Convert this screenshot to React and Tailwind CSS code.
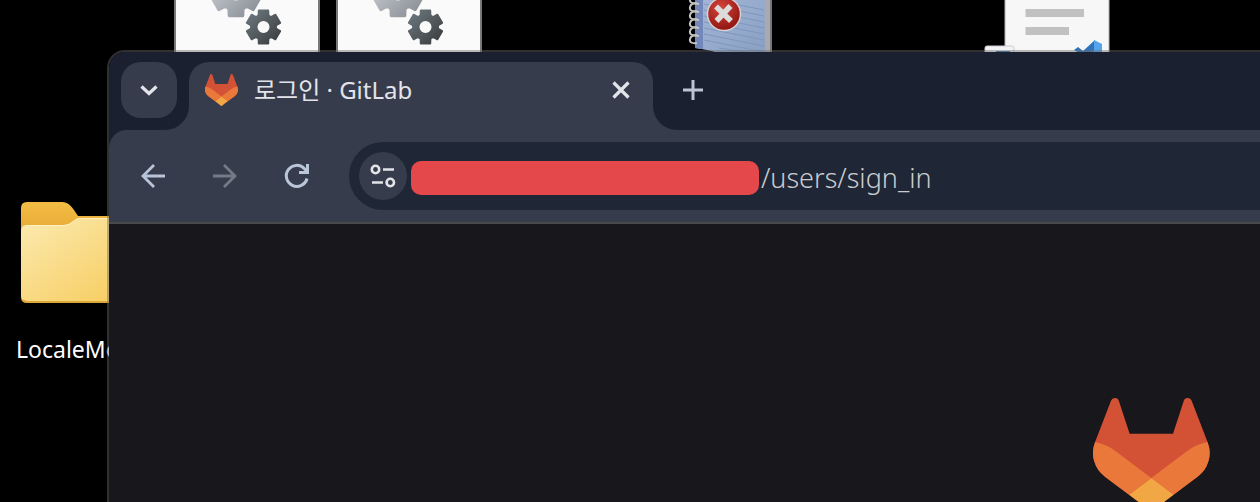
import React from "react";

const gearPath = (cx, cy, r, hole) => {
  const shape = [
    [-30, 0.68],
    [-22, 0.72],
    [-16, 0.95],
    [16, 0.95],
    [22, 0.72],
  ];
  const points = [];
  for (let tooth = 0; tooth < 6; tooth++) {
    for (const [angle, radius] of shape) {
      const a = ((tooth * 60 + 90 + angle) * Math.PI) / 180;
      points.push(
        `${(cx + r * radius * Math.cos(a)).toFixed(2)} ${(cy + r * radius * Math.sin(a)).toFixed(2)}`
      );
    }
  }
  return `M${points.join("L")}Z M${cx - hole} ${cy}a${hole} ${hole} 0 1 0 ${hole * 2} 0a${hole} ${hole} 0 1 0 ${-hole * 2} 0Z`;
};

function GitLabLogo({ className }) {
  return (
    <svg viewBox="0 0 25 24" className={className} aria-hidden="true">
      <path
        fill="#d35135"
        d="m24.507 9.5-.034-.09L21.082.562a.896.896 0 0 0-1.694.091l-2.29 7.01H7.825L5.535.653a.898.898 0 0 0-1.694-.09L.451 9.411.416 9.5a6.297 6.297 0 0 0 2.09 7.278l.012.01.03.022 5.16 3.867 2.56 1.935 1.554 1.176a1.051 1.051 0 0 0 1.268 0l1.555-1.176 2.56-1.935 5.197-3.89.014-.01A6.297 6.297 0 0 0 24.507 9.5Z"
      />
      <path
        fill="#eb783b"
        d="m24.507 9.5-.034-.09a11.44 11.44 0 0 0-4.56 2.051l-7.447 5.632 4.742 3.584 5.197-3.89.014-.01A6.297 6.297 0 0 0 24.507 9.5Z"
      />
      <path
        fill="#f0a744"
        d="m7.707 20.677 2.56 1.935 1.555 1.176a1.051 1.051 0 0 0 1.268 0l1.555-1.176 2.56-1.935-4.743-3.584-4.755 3.584Z"
      />
      <path
        fill="#eb783b"
        d="M5.01 11.461a11.43 11.43 0 0 0-4.56-2.05L.416 9.5a6.297 6.297 0 0 0 2.09 7.278l.012.01.03.022 5.16 3.867 4.745-3.584-7.444-5.632Z"
      />
    </svg>
  );
}

function BatchFileIcon({ id, className }) {
  return (
    <svg viewBox="0 0 146 60" className={className} aria-hidden="true">
      <defs>
        <linearGradient id={`${id}-light`} x1="0" y1="0" x2="1" y2="1">
          <stop offset="0.3" stopColor="#bcc0c6" />
          <stop offset="1" stopColor="#858b92" />
        </linearGradient>
        <linearGradient id={`${id}-dark`} x1="0" y1="0" x2="1" y2="1">
          <stop offset="0.1" stopColor="#68747a" />
          <stop offset="0.9" stopColor="#3f4143" />
        </linearGradient>
      </defs>
      <path fill="#fafafa" stroke="#7b7976" strokeWidth="2" d="M1-5h144v75H1z" />
      <path
        fill={`url(#${id}-light)`}
        stroke={`url(#${id}-light)`}
        strokeWidth="3"
        strokeLinejoin="round"
        fillRule="evenodd"
        d={gearPath(62, -8, 26, 10)}
      />
      <path
        fill={`url(#${id}-dark)`}
        stroke={`url(#${id}-dark)`}
        strokeWidth="2"
        strokeLinejoin="round"
        fillRule="evenodd"
        d={gearPath(89.5, 27, 18, 7)}
      />
    </svg>
  );
}

function NotebookIcon({ className }) {
  return (
    <svg viewBox="0 0 90 60" className={className} aria-hidden="true">
      <defs>
        <linearGradient id="cover" x1="0" y1="0" x2="1" y2="1">
          <stop offset="0" stopColor="#a5b6d8" />
          <stop offset="1" stopColor="#88a0c2" />
        </linearGradient>
        <radialGradient id="badge" cx="0.4" cy="0.3" r="0.75">
          <stop offset="0" stopColor="#d3453a" />
          <stop offset="1" stopColor="#8c120f" />
        </radialGradient>
      </defs>
      <path fill="#a9aaae" d="M79-2h8v62h-8z" />
      <path fill="#75777c" d="M85-2h2v62h-2z" />
      <path fill="url(#cover)" d="M10-2h70v57H40Q26 50 10 48z" />
      <path fill="#7287ba" d="M10-2h8v51l-8-1z" />
      <path
        fill="none"
        stroke="#7f96bd"
        d="M19 4l60 12M19 10l60 12M19 16l60 12M19 22l60 12M19 28l60 12M19 34l60 12M19 40l60 12M34 48l45 7M19-2l60 12"
      />
      {[-2, 6, 14, 22, 30, 38].map((y) => (
        <path
          key={y}
          fill="none"
          stroke="#c4c4c6"
          strokeWidth="2"
          d={`M14 ${y - 2}Q6 ${y - 4} 5 ${y + 1}T12 ${y + 5}`}
        />
      ))}
      <circle cx="39" cy="14" r="16.5" fill="url(#badge)" stroke="#d6cfd0" strokeWidth="1.5" />
      <path
        stroke="#dcdcdb"
        strokeWidth="5.5"
        d="M31 6.500l15 14.500M45.500 6l-14 15"
      />
    </svg>
  );
}

function DocumentIcon({ className }) {
  return (
    <svg viewBox="0 0 128 60" className={className} aria-hidden="true">
      <path fill="#f7f7f7" stroke="#b3b3b3" d="M21-5h104v70H21z" />
      <path fill="#c1c1c1" d="M41.500 9h58.500v8H41.500zM41.500 27h43.500v8H41.500z" />
      <rect x="1" y="46" width="29" height="12" rx="2" fill="#f2f3f6" stroke="#c9cdd6" />
      <path fill="#3c7cb5" d="M12 51h14v4H12z" />
      <path fill="#2f74b8" d="M90 50l4-3 5 4 12-11v10l-7 8z" />
      <path fill="#55a4ec" d="M110 40l8 4v16h-8z" />
    </svg>
  );
}

function FolderIcon({ className }) {
  return (
    <svg viewBox="0 0 124 101" className={className} aria-hidden="true">
      <defs>
        <linearGradient id="folder" x1="0" y1="0" x2="1" y2="1">
          <stop offset="0" stopColor="#fceab0" />
          <stop offset="0.8" stopColor="#f7d069" />
        </linearGradient>
        <linearGradient id="folder-back" x1="0" y1="0" x2="0" y2="1">
          <stop offset="0" stopColor="#f3bd45" />
          <stop offset="0.24" stopColor="#e9ad38" />
        </linearGradient>
      </defs>
      <path
        fill="url(#folder-back)"
        d="M6 0h35c6 0 9 4 12 8l4 6h61q6 0 6 6v74q0 7-6 7H6q-6 0-6-6V6q0-6 6-6z"
      />
      <path
        fill="url(#folder)"
        d="M6 23h36c9 0 11-7 17-7h59q6 0 6 6v71q0 6-6 6H6q-6 0-6-6V29q0-6 6-6z"
      />
      <path fill="none" stroke="#fff0c2" d="M4 23.500h38c9 0 11-7 17-7h60" />
      <path fill="none" stroke="#d8a53a" strokeWidth="1.500" d="M2 98q2 2 5 2h112" />
    </svg>
  );
}

function ToolIcon({ children }) {
  return (
    <svg
      viewBox="0 0 36 36"
      className="size-9 shrink-0"
      fill="none"
      stroke="currentColor"
      strokeWidth="3"
      aria-hidden="true"
    >
      {children}
    </svg>
  );
}

function Desktop() {
  return (
    <>
      <BatchFileIcon id="gears-a" className="absolute left-[174px] top-0 w-[146px]" />
      <BatchFileIcon id="gears-b" className="absolute left-[336px] top-0 w-[146px]" />
      <NotebookIcon className="absolute left-[685px] top-0 w-[90px]" />
      <DocumentIcon className="absolute left-[984px] top-0 w-32" />
      <div className="absolute left-4 top-[202px] flex flex-col gap-[30px]">
        <FolderIcon className="ml-[5px] w-[124px]" />
        <span className="text-[23px] leading-8 text-white">LocaleMo</span>
      </div>
    </>
  );
}

function TabStrip() {
  return (
    <div className="flex bg-[#1a2030] pl-3 pt-2.5 text-[#e3e4ea]">
      <button
        type="button"
        aria-label="Search tabs"
        className="mr-3 flex size-14 items-center justify-center rounded-[20px] bg-[#363c4b]"
      >
        <ToolIcon>
          <path d="M10.500 14.500L18 21.500L25.500 14.500" strokeWidth="3.2" />
        </ToolIcon>
      </button>
      <div className="relative flex h-17 w-[464px] items-center rounded-t-[20px] bg-[#363c4b] px-4 pb-3">
        <svg viewBox="0 0 24 24" className="absolute -left-6 bottom-0 size-6 fill-[#363c4b]" aria-hidden="true">
          <path d="M24 0A24 24 0 0 1 0 24H24Z" />
        </svg>
        <svg viewBox="0 0 24 24" className="absolute -right-6 bottom-0 size-6 fill-[#363c4b]" aria-hidden="true">
          <path d="M0 0A24 24 0 0 0 24 24H0Z" />
        </svg>
        <GitLabLogo className="mr-4 w-[33px]" />
        <span className="flex-1 truncate text-2xl leading-9">로그인 · GitLab</span>
        <button type="button" aria-label="Close tab" className="flex size-8 items-center justify-center">
          <ToolIcon>
            <path d="M10.500 10.500l15 15M25.500 10.500l-15 15" strokeWidth="3.200" />
          </ToolIcon>
        </button>
      </div>
      <button
        type="button"
        aria-label="New tab"
        className="ml-3 flex size-14 items-center justify-center text-[#bdc5d4]"
      >
        <ToolIcon>
          <path d="M18 8v20M8 18h20" />
        </ToolIcon>
      </button>
    </div>
  );
}

function Toolbar() {
  return (
    <div className="bg-[#1a2030]">
      <div className="flex items-center rounded-tl-[18px] border-b-2 border-[#47494b] bg-[#363c4b] py-3 pl-5 text-[#b9c5d8]">
        <div className="mr-7 flex gap-6">
          <button type="button" aria-label="Back" className="flex size-12 items-center justify-center">
            <ToolIcon>
              <path d="M30 18H8M19 7L8 18l11 11" strokeWidth="2.8" />
            </ToolIcon>
          </button>
          <button
            type="button"
            aria-label="Forward"
            disabled
            className="flex size-12 items-center justify-center text-[#747a86]"
          >
            <ToolIcon>
              <path d="M6 18h22M17 7l11 11-11 11" strokeWidth="2.8" />
            </ToolIcon>
          </button>
          <button type="button" aria-label="Reload" className="flex size-12 items-center justify-center">
            <ToolIcon>
              <path d="M28 20.500A10.500 10.500 0 1 1 25.500 10.700L28.500 14" />
              <path d="M28.500 6v8.500H20" />
            </ToolIcon>
          </button>
        </div>
        <div className="flex h-17 min-w-0 flex-1 items-center rounded-l-full bg-[#1f2635] pl-2.5">
          <button
            type="button"
            aria-label="View site information"
            className="flex size-12 shrink-0 items-center justify-center rounded-full bg-[#363c4b] text-[#e3e4ea]"
          >
            <ToolIcon>
              <g strokeWidth="2.600">
                <circle cx="10.500" cy="11.500" r="3.700" />
                <circle cx="25.300" cy="24.500" r="3.700" />
                <path d="M18 11.500h11M7 24.500h11" />
              </g>
            </ToolIcon>
          </button>
          <div className="flex min-w-0 flex-1 items-center pl-1 pt-1">
            <span className="h-[34px] w-[348px] shrink-0 rounded-[10px] bg-[#e4484a]" />
            <input
              aria-label="Address"
              defaultValue="/users/sign_in"
              className="ml-0.5 min-w-0 flex-1 bg-transparent text-[27px] font-light leading-9 text-[#cbccd0] outline-none"
            />
          </div>
        </div>
      </div>
    </div>
  );
}

export default function App() {
  return (
    <div
      lang="ko"
      className="relative h-screen overflow-hidden bg-black font-['Noto_Sans','Noto_Sans_CJK_KR',sans-serif]"
    >
      <Desktop />
      <section
        aria-label="Browser"
        className="absolute bottom-0 left-[107px] right-0 top-[50px] flex flex-col overflow-hidden rounded-tl-[18px] border-l-2 border-t-2 border-[#6c6c6c]/45"
      >
        <TabStrip />
        <Toolbar />
        <main className="flex flex-1 items-start justify-end overflow-hidden bg-[#18171c] pr-[50px] pt-[174px]">
          <GitLabLogo className="w-[117px] shrink-0" />
        </main>
      </section>
    </div>
  );
}
